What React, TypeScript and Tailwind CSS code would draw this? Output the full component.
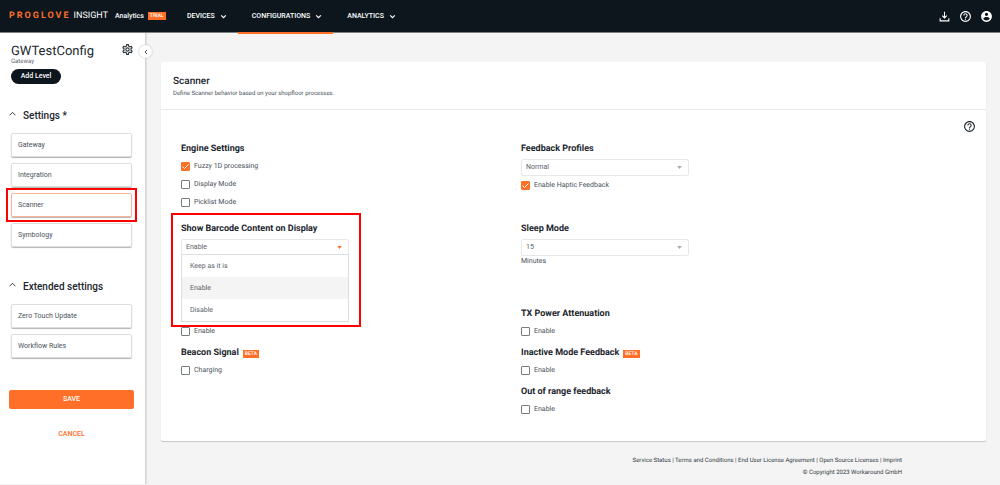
import { useState, type ReactNode } from "react";

const HELP_PATH =
  "M11 18h2v-2h-2v2zm1-16C6.48 2 2 6.48 2 12s4.48 10 10 10 10-4.48 10-10S17.52 2 12 2zm0 18c-4.41 0-8-3.59-8-8s3.59-8 8-8 8 3.59 8 8-3.59 8-8 8zm0-14c-2.21 0-4 1.79-4 4h2c0-1.1.9-2 2-2s2 .9 2 2c0 2-3 1.75-3 5h2c0-2.25 3-2.5 3-5 0-2.21-1.79-4-4-4z";
const DOWNLOAD_PATH = "M19 15v4H5v-4H3v6h18v-6h-2zM17 11l-1.4-1.4L13 12.200V3h-2v9.200L8.400 9.600 7 11l5 5 5-5z";
const ACCOUNT_PATH =
  "M12 2C6.480 2 2 6.480 2 12s4.480 10 10 10 10-4.480 10-10S17.520 2 12 2zm0 3c1.660 0 3 1.340 3 3s-1.340 3-3 3-3-1.340-3-3 1.340-3 3-3zm0 14.200c-2.500 0-4.710-1.280-6-3.220.030-1.990 4-3.080 6-3.080 1.990 0 5.970 1.090 6 3.080-1.290 1.940-3.500 3.220-6 3.220z";
const GEAR_PATH =
  "M19.430 12.980c.040-.320.070-.640.070-.980s-.030-.660-.070-.980l2.110-1.650c.190-.150.240-.420.120-.640l-2-3.460c-.120-.220-.390-.300-.610-.220l-2.490 1c-.520-.400-1.080-.730-1.690-.980l-.380-2.650C14.460 2.180 14.250 2 14 2h-4c-.250 0-.460.180-.490.420l-.380 2.650c-.610.250-1.170.590-1.690.980l-2.490-1c-.230-.090-.490 0-.610.220l-2 3.460c-.130.220-.070.490.120.640l2.110 1.650c-.040.320-.070.650-.070.980s.030.660.070.980l-2.110 1.650c-.190.150-.240.420-.120.640l2 3.460c.120.220.390.300.610.220l2.490-1c.520.400 1.080.730 1.690.980l.380 2.650c.030.240.240.420.490.420h4c.250 0 .460-.180.490-.420l.380-2.650c.610-.250 1.170-.590 1.690-.980l2.490 1c.230.090.490 0 .610-.220l2-3.460c.120-.220.070-.490-.120-.640l-2.110-1.650zm-1.980-1.710c.040.310.050.520.050.730s-.020.430-.050.730l-.140 1.130.890.700 1.080.840-.700 1.210-1.270-.510-1.040-.420-.900.680c-.430.320-.840.560-1.250.730l-1.060.430-.160 1.130-.200 1.350h-1.400l-.190-1.350-.160-1.130-1.060-.430c-.430-.180-.830-.410-1.230-.710l-.910-.700-1.060.430-1.270.510-.700-1.210 1.080-.840.890-.700-.140-1.130c-.030-.310-.050-.540-.050-.740s.020-.430.050-.730l.140-1.130-.890-.700-1.080-.840.700-1.210 1.270.510 1.040.420.900-.680c.430-.320.840-.560 1.250-.730l1.060-.430.160-1.130.200-1.350h1.390l.190 1.350.160 1.130 1.060.430c.430.180.830.410 1.230.710l.910.700 1.060-.430 1.270-.510.700 1.210-1.070.850-.890.700.140 1.130zM12 8c-2.210 0-4 1.790-4 4s1.790 4 4 4 4-1.790 4-4-1.790-4-4-4zm0 6c-1.100 0-2-.900-2-2s.900-2 2-2 2 .900 2 2-.900 2-2 2z";

function Icon({ path, className }: { path: string; className: string }) {
  return (
    <svg viewBox="0 0 24 24" fill="currentColor" aria-hidden="true" className={className}>
      <path d={path} />
    </svg>
  );
}

function Chevron({ points, className }: { points: string; className: string }) {
  return (
    <svg viewBox="0 0 12 12" fill="none" stroke="currentColor" strokeWidth="2" aria-hidden="true" className={className}>
      <polyline points={points} />
    </svg>
  );
}

function NavItem({ label, active = false }: { label: string; active?: boolean }) {
  return (
    <button
      type="button"
      className={
        active
          ? "-mb-[2px] flex items-center gap-[5px] border-b-2 border-[#ff6f28] pl-[14px] pr-[11px]"
          : "-mb-[2px] flex items-center gap-[5px] border-b-2 border-transparent pl-[14px] pr-[11px]"
      }
    >
      {label}
      <Chevron points="2,4 6,8 10,4" className="size-[7px]" />
    </button>
  );
}

function Header() {
  return (
    <header className="relative z-10 flex h-[33px] shrink-0 border-b border-[#7b8085] bg-[#0d161d] text-white">
      <div className="flex w-[173px] items-center pl-[9px]">
        <span className="text-[9px] font-bold leading-[14px] tracking-[2px] text-[#ff6f28]">PROGLOVE</span>
        <span className="ml-[3px] text-[9px] leading-[14px]">INSIGHT</span>
        <span className="ml-[7px] text-[7px] font-medium">Analytics</span>
        <span className="ml-1 bg-[#ff6f28] px-[2px] text-[5px] font-medium leading-[8px]">TRIAL</span>
      </div>
      <nav className="flex text-[7px] font-medium">
        <NavItem label="DEVICES" />
        <NavItem label="CONFIGURATIONS" active />
        <NavItem label="ANALYTICS" />
      </nav>
      <div className="ml-auto flex items-center gap-[8px] pr-[7px]">
        <button type="button" aria-label="Download">
          <Icon path={DOWNLOAD_PATH} className="size-[13px]" />
        </button>
        <button type="button" aria-label="Help">
          <Icon path={HELP_PATH} className="size-[13px]" />
        </button>
        <button type="button" aria-label="Account">
          <Icon path={ACCOUNT_PATH} className="size-[13px]" />
        </button>
      </div>
    </header>
  );
}

function SideGroup({ title, items, selected }: { title: string; items: string[]; selected?: string }) {
  return (
    <section>
      <h2>
        <button type="button" className="flex h-4 items-center gap-[7px] text-[10px] font-medium text-[#1c262e]">
          <svg viewBox="0 0 12 12" fill="none" stroke="currentColor" strokeWidth="1.5" aria-hidden="true" className="-mt-1 size-[7px]">
            <polyline points="1,9 6,4 11,9" />
          </svg>
          {title}
        </button>
      </h2>
      <ul className="mt-[10px] flex flex-col gap-[6px] pl-[2px] pr-[2px]">
        {items.map((item) => (
          <li key={item} className="relative">
            <button
              type="button"
              className={
                item === selected
                  ? "block h-[24px] w-full rounded-[2px] border border-[#f7b596] px-[6px] text-left text-[7px] text-[#49525a] shadow-[0_1px_1px_#b4b4b4]"
                  : "block h-[24px] w-full rounded-[2px] border border-[#dcdddf] px-[6px] text-left text-[7px] text-[#49525a] shadow-[0_1px_1px_#b4b4b4]"
              }
            >
              {item}
            </button>
            {item === selected && (
              <span className="pointer-events-none absolute -inset-[5px] border-2 border-[#ff0000]" />
            )}
          </li>
        ))}
      </ul>
    </section>
  );
}

function Sidebar() {
  return (
    <aside className="relative mb-px flex w-[146px] shrink-0 flex-col border-r border-[#d4d5d6] bg-white pl-[9px] pr-[11px] shadow-[1px_0_1px_#e4e4e4]">
      <button
        type="button"
        aria-label="Collapse sidebar"
        className="absolute -right-[7px] top-[12px] flex size-[13px] items-center justify-center rounded-full bg-white text-[#4a4f54] shadow-[0_0_2px_#b5b5b5]"
      >
        <Chevron points="8,2 4,6 8,10" className="size-[6px]" />
      </button>
      <div className="flex items-start justify-between pl-[2px] pt-[10px]">
        <h1 className="text-[13px] leading-[18px] text-[#1c262e]">GWTestConfig</h1>
        <button type="button" aria-label="Configuration settings" className="text-[#2a333a]">
          <Icon path={GEAR_PATH} className="size-[13px]" />
        </button>
      </div>
      <p className="-mt-[3px] pl-[2px] text-[6px] leading-[8px] text-[#5b6268]">Gateway</p>
      <button
        type="button"
        className="ml-[2px] mt-[3px] h-[15px] w-[50px] rounded-full bg-[#0d161d] text-[7px] font-medium leading-[15px] text-white"
      >
        Add Level
      </button>
      <div className="mt-[23px]">
        <SideGroup title="Settings *" items={["Gateway", "Integration", "Scanner", "Symbology"]} selected="Scanner" />
      </div>
      <div className="mt-[31px]">
        <SideGroup title="Extended settings" items={["Zero Touch Update", "Workflow Rules"]} />
      </div>
      <button type="button" className="mt-8 h-[19px] rounded-[2px] bg-[#ff6f28] text-[7px] font-medium text-white">
        SAVE
      </button>
      <button type="button" className="mt-4 h-[18px] text-[7px] font-medium text-[#ff6f28]">
        CANCEL
      </button>
    </aside>
  );
}

function Check({ label, checked = false }: { label: string; checked?: boolean }) {
  const [on, setOn] = useState(checked);
  return (
    <label className="flex h-[18px] items-center gap-1 text-[7px] text-[#49525a]">
      <span className="grid size-[9px] place-items-center">
        <input
          type="checkbox"
          checked={on}
          onChange={() => setOn(!on)}
          className="col-start-1 row-start-1 size-[9px] appearance-none rounded-[1px] border border-[#777c80] bg-white checked:border-[#ff6f28] checked:bg-[#ff6f28]"
        />
        {on && (
          <svg viewBox="0 0 9 9" fill="none" stroke="#fff" aria-hidden="true" className="pointer-events-none col-start-1 row-start-1 size-[9px]">
            <polyline points="1.5,4.700 3.500,6.500 7.500,2.500" />
          </svg>
        )}
      </span>
      {label}
    </label>
  );
}

function Field({ title, beta = false, children }: { title: string; beta?: boolean; children: ReactNode }) {
  return (
    <section>
      <h3 className="flex h-[17px] items-center gap-1 pt-[2px] text-[9px] font-bold leading-[15px] text-[#1c262e]">
        {title}
        {beta && <span className="bg-[#ff6f28] px-[2px] text-[5px] font-medium leading-[8px] text-white">BETA</span>}
      </h3>
      {children}
    </section>
  );
}

function Select({ label, value, options, open = false }: { label: string; value: string; options: string[]; open?: boolean }) {
  const [current, setCurrent] = useState(value);
  return (
    <div className="relative mt-[2px] w-[168px]">
      <div className="grid items-center">
        <select
          aria-label={label}
          value={current}
          onChange={(e) => setCurrent(e.target.value)}
          className="col-start-1 row-start-1 h-[17px] w-full appearance-none rounded-[2px] border border-[#e6e8ea] bg-white px-1 text-[7px] text-[#5b6268]"
        >
          {options.map((option) => (
            <option key={option}>{option}</option>
          ))}
        </select>
        <svg
          viewBox="0 0 6 4"
          aria-hidden="true"
          className={
            open
              ? "pointer-events-none col-start-1 row-start-1 mr-[7px] h-[3px] w-[5px] justify-self-end fill-[#ff6f28]"
              : "pointer-events-none col-start-1 row-start-1 mr-[7px] h-[3px] w-[5px] justify-self-end fill-[#a3a8ad]"
          }
        >
          <path d="M0 0h6L3 4z" />
        </svg>
      </div>
      {open && (
        <ul
          role="listbox"
          aria-label={label}
          className="absolute inset-x-0 top-[15px] z-10 border border-[#dcdee0] bg-white text-[7px] text-[#5b6268]"
        >
          {options.map((option) => (
            <li
              key={option}
              role="option"
              aria-selected={option === current}
              onClick={() => setCurrent(option)}
              className="h-[22px] px-2 leading-[22px] aria-selected:bg-[#f4f4f4]"
            >
              {option}
            </li>
          ))}
        </ul>
      )}
    </div>
  );
}

function ScannerCard() {
  return (
    <section className="rounded-[2px] bg-white shadow-[0_1px_1px_#c4c6c8]">
      <div className="h-[48px] border-b border-[#e9e9ea] pl-3 pt-[12px]">
        <h2 className="text-[10px] font-medium leading-[15px] text-[#1c262e]">Scanner</h2>
        <p className="text-[6px] leading-[9px] text-[#49525a]">Define Scanner behavior based on your shopfloor processes.</p>
      </div>
      <div className="flex h-[30px] items-end justify-end px-[10px] pb-[7px] pt-[11px] text-[#1c262e]">
        <button type="button" aria-label="Scanner help">
          <Icon path={HELP_PATH} className="size-[13px]" />
        </button>
      </div>
      <div className="pb-[23px] pl-5 pr-[125px]">
        <div className="grid grid-cols-2 gap-y-[9px]">
          <Field title="Engine Settings">
            <Check label="Fuzzy 1D processing" checked />
            <Check label="Display Mode" />
            <Check label="Picklist Mode" />
          </Field>
          <Field title="Feedback Profiles">
            <Select label="Feedback Profiles" value="Normal" options={["Normal"]} />
            <Check label="Enable Haptic Feedback" checked />
          </Field>
          <div className="relative h-[76px]">
            <Field title="Show Barcode Content on Display">
              <Select
                label="Show Barcode Content on Display"
                value="Enable"
                options={["Keep as it is", "Enable", "Disable"]}
                open
              />
            </Field>
            <span className="pointer-events-none absolute -left-[10px] -top-[7px] z-20 h-[114px] w-[190px] border-2 border-[#ff0000]" />
          </div>
          <Field title="Sleep Mode">
            <Select label="Sleep Mode" value="15" options={["15"]} />
            <p className="text-[7px] leading-[10px] text-[#49525a]">Minutes</p>
          </Field>
        </div>
        <div className="mt-[9px] grid grid-cols-2 gap-y-1">
          <div className="flex flex-col justify-end">
            <Check label="Enable" />
          </div>
          <Field title="TX Power Attenuation">
            <Check label="Enable" />
          </Field>
          <Field title="Beacon Signal" beta>
            <Check label="Charging" />
          </Field>
          <Field title="Inactive Mode Feedback" beta>
            <Check label="Enable" />
          </Field>
          <div />
          <Field title="Out of range feedback">
            <Check label="Enable" />
          </Field>
        </div>
      </div>
    </section>
  );
}

function Footer() {
  const links = ["Service Status", "Terms and Conditions", "End User License Agreement", "Open Source Licenses", "Imprint"];
  return (
    <footer className="mt-[14px] pr-[84px] text-right text-[6px] leading-[12px] text-[#30393f]">
      <p>
        {links.map((link, i) => (
          <span key={link}>
            {i > 0 && " | "}
            <a href="#">{link}</a>
          </span>
        ))}
      </p>
      <p>© Copyright 2023 Workaround GmbH</p>
    </footer>
  );
}

export default function App() {
  return (
    <div className="flex min-h-screen flex-col bg-[#f4f4f4] font-[Roboto,sans-serif] [text-rendering:geometricPrecision]">
      <Header />
      <div className="flex grow">
        <Sidebar />
        <main className="min-w-0 grow pl-[15px] pr-[14px] pt-[29px]">
          <ScannerCard />
          <Footer />
        </main>
      </div>
    </div>
  );
}
